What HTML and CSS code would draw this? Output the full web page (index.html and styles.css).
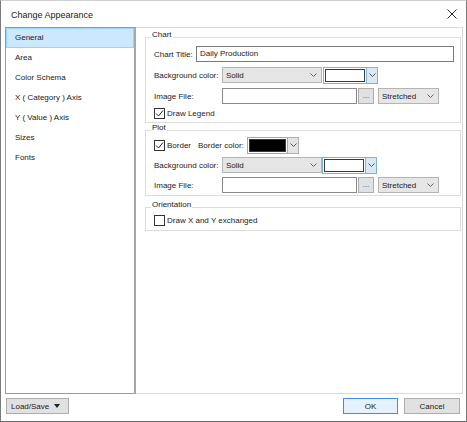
FILE: index.html
```html
<!DOCTYPE html>
<html>
<head>
	<title>Change Appearance</title>
	<meta charset="utf-8">
	<link rel="stylesheet" href="styles.css">
</head>
<body>
	<div class="window">
		<div class="titlebar">
			<span class="title">Change Appearance</span>
			<svg class="close" width="10" height="10" viewBox="0 0 10 10"><path d="M0.5 0.5L9.5 9.5M9.5 0.5L0.5 9.5" stroke="#222" stroke-width="1"/></svg>
		</div>

		<div class="main">
			<ul class="nav">
				<li class="selected">General</li>
				<li>Area</li>
				<li>Color Schema</li>
				<li>X ( Category ) Axis</li>
				<li>Y ( Value ) Axis</li>
				<li>Sizes</li>
				<li>Fonts</li>
			</ul>

			<div class="panel">
				<fieldset class="group chart">
					<legend>Chart</legend>
					<div class="row">
						<label class="lbl short">Chart Title:</label>
						<div class="input title-input">Daily Production</div>
					</div>
					<div class="row">
						<label class="lbl">Background color:</label>
						<div class="select fill">Solid<svg class="chev" width="7" height="4" viewBox="0 0 7 4"><path d="M0.5 0.5L3.5 3.5L6.5 0.5" fill="none" stroke="#666"/></svg></div>
						<div class="colorpick">
							<div class="swatch"><span class="white"></span></div>
							<div class="drop blue"><svg width="7" height="4" viewBox="0 0 7 4"><path d="M0.5 0.5L3.5 3.5L6.5 0.5" fill="none" stroke="#555"/></svg></div>
						</div>
					</div>
					<div class="row">
						<label class="lbl">Image File:</label>
						<div class="input file"></div>
						<div class="btn dots">...</div>
						<div class="select stretch">Stretched<svg class="chev" width="7" height="4" viewBox="0 0 7 4"><path d="M0.5 0.5L3.5 3.5L6.5 0.5" fill="none" stroke="#666"/></svg></div>
					</div>
					<div class="row check-row">
						<span class="check on"><svg width="9" height="9" viewBox="0 0 9 9"><path d="M1 4.5L3.5 7L8 1.5" fill="none" stroke="#222" stroke-width="1"/></svg></span>
						<span>Draw Legend</span>
					</div>
				</fieldset>

				<fieldset class="group plot">
					<legend>Plot</legend>
					<div class="row">
						<span class="check on"><svg width="9" height="9" viewBox="0 0 9 9"><path d="M1 4.5L3.5 7L8 1.5" fill="none" stroke="#222" stroke-width="1"/></svg></span>
						<span class="border-lbl">Border</span>
						<label class="bc-lbl">Border color:</label>
						<div class="colorpick">
							<div class="swatch dark"><span class="black"></span></div>
							<div class="drop"><svg width="7" height="4" viewBox="0 0 7 4"><path d="M0.5 0.5L3.5 3.5L6.5 0.5" fill="none" stroke="#555"/></svg></div>
						</div>
					</div>
					<div class="row">
						<label class="lbl">Background color:</label>
						<div class="select fill">Solid<svg class="chev" width="7" height="4" viewBox="0 0 7 4"><path d="M0.5 0.5L3.5 3.5L6.5 0.5" fill="none" stroke="#666"/></svg></div>
						<div class="colorpick">
							<div class="swatch"><span class="white"></span></div>
							<div class="drop blue"><svg width="7" height="4" viewBox="0 0 7 4"><path d="M0.5 0.5L3.5 3.5L6.5 0.5" fill="none" stroke="#555"/></svg></div>
						</div>
					</div>
					<div class="row">
						<label class="lbl">Image File:</label>
						<div class="input file"></div>
						<div class="btn dots">...</div>
						<div class="select stretch">Stretched<svg class="chev" width="7" height="4" viewBox="0 0 7 4"><path d="M0.5 0.5L3.5 3.5L6.5 0.5" fill="none" stroke="#666"/></svg></div>
					</div>
				</fieldset>

				<fieldset class="group orient">
					<legend>Orientation</legend>
					<div class="row check-row">
						<span class="check"></span>
						<span>Draw X and Y exchanged</span>
					</div>
				</fieldset>
			</div>
		</div>

		<div class="footer">
			<div class="btn loadsave">Load/Save <span class="tri"></span></div>
			<div class="spacer"></div>
			<div class="btn ok">OK</div>
			<div class="btn cancel">Cancel</div>
		</div>
	</div>
</body>
</html>
```

FILE: styles.css
```css
body{
	margin: 0;
	background: #fff;
	font-family: "Liberation Sans", Arial, sans-serif;
	font-size: 8px;
	color: #1a1a1a;
}
.window{
	width: 465px;
	height: 420px;
	border: 1px solid #7a7a7a;
	border-top-color: #cfcfcf;
	border-bottom: 1px solid #6a6a6a;
	background: #fff;
	display: flex;
	flex-direction: column;
}
.titlebar{
	height: 26px;
	display: flex;
	align-items: center;
	padding: 0 9px 0 10px;
}
.title{
	font-size: 9px;
	flex: 1;
	margin-top: 1px;
}

/* main area: list on the left, panel on the right */
.main{
	height: 367px;
	display: flex;
	padding: 0 3px 0 4px;
}
.nav{
	list-style: none;
	margin: 0;
	padding: 0;
	width: 131px;
	box-sizing: border-box;
	border: 1px solid #9a9a9a;
	border-right: 2px solid #a8a8a8;
}
.nav li{
	height: 20px;
	line-height: 20px;
	padding-left: 9px;
	white-space: nowrap;
}
.nav li.selected{
	background: #cce8ff;
	border: 1px solid #99d1ff;
	line-height: 18px;
	height: 18px;
	padding-left: 8px;
}
.panel{
	width: 327px;
	box-sizing: border-box;
	border: 1px solid #dadada;
	border-left: none;
	padding: 2px 1px 0 9px;
}

/* group boxes */
.group{
	margin: 0;
	border: 1px solid #dcdcdc;
	padding: 0 0 0 8px;
}
.group legend{
	line-height: 10px;
	padding: 0 1px 4px;
	margin-left: -3px;
}
.chart{
	padding-top: 2px;
	padding-bottom: 3px;
}
.plot{
	padding-bottom: 2px;
}
.orient{
	margin-top: 4px;
	padding-bottom: 4px;
}
.group > .row + .row{
	margin-top: 4px;
}
.chart > .row + .row{
	margin-top: 5px;
}
.chart > .check-row{
	margin-top: 3px !important;
}
.row{
	display: flex;
	align-items: center;
	height: 16px;
	white-space: nowrap;
}
.check-row{
	height: 12px;
}
.lbl{
	width: 68px;
}
.lbl.short{
	width: 42px;
}

.input{
	height: 16px;
	box-sizing: border-box;
	border: 1px solid #7a7a7a;
	background: #fff;
	padding-left: 3px;
	line-height: 14px;
}
.title-input{
	width: 258px;
}
.file{
	width: 135px;
	border-color: #8a8a8a;
}
.select{
	height: 16px;
	box-sizing: border-box;
	border: 1px solid #b4b4b4;
	background: #e6e6e6;
	display: flex;
	align-items: center;
	padding-left: 3px;
}
.select .chev{
	margin-left: auto;
	margin-right: 4px;
}
.fill{
	width: 100px;
}
.stretch{
	width: 61px;
	margin-left: 4px;
}
.btn{
	box-sizing: border-box;
	border: 1px solid #adadad;
	background: #e1e1e1;
	display: flex;
	align-items: center;
	justify-content: center;
}
.dots{
	width: 16px;
	height: 16px;
	margin-left: 1px;
	color: #444;
	line-height: 10px;
}

/* colour picker */
.colorpick{
	display: flex;
	height: 17px;
	margin-left: 1px;
}
.swatch{
	width: 44px;
	box-sizing: border-box;
	border: 1px solid #7fb0de;
	padding: 1px;
	display: flex;
}
.swatch span{
	flex: 1;
	border: 1px solid #3a3a3a;
}
.swatch .white{
	background: #fff;
}
.swatch .black{
	background: #000;
}
.drop{
	width: 11px;
	box-sizing: border-box;
	border: 1px solid #b0b0b0;
	border-left: none;
	background: #e4e4e4;
	display: flex;
	align-items: center;
	justify-content: center;
}
.drop.blue{
	background: #dae7f4;
	border-color: #7fb0de;
}
.border-lbl{
	width: 31px;
}
.bc-lbl{
	width: 49px;
}
.plot .colorpick{
	margin-left: 0;
}
.swatch.dark{
	width: 41px;
}

/* check boxes */
.check{
	width: 11px;
	height: 11px;
	box-sizing: border-box;
	border: 1px solid #333;
	background: #fff;
	margin-right: 2px;
	display: flex;
	align-items: center;
	justify-content: center;
}

/* footer buttons */
.footer{
	flex: 1;
	display: flex;
	align-items: flex-start;
	padding: 4px 6px 0 5px;
}
.footer .btn{
	height: 16px;
}
.spacer{
	flex: 1;
}
.loadsave{
	width: 63px;
	justify-content: flex-start;
	padding-left: 4px;
}
.tri{
	width: 0;
	height: 0;
	border-left: 3px solid transparent;
	border-right: 3px solid transparent;
	border-top: 4px solid #222;
	margin-left: 5px;
}
.ok{
	width: 55px;
	border: 1px solid #3d8ee0;
	background: #e5f1fb;
}
.cancel{
	width: 56px;
	margin-left: 6px;
}
```
